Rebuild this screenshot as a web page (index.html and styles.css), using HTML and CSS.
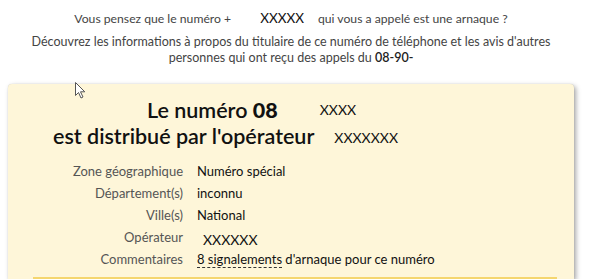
FILE: index.html
```html
<!DOCTYPE html>
<html lang="fr">
<head>
<meta charset="utf-8">
<link rel="stylesheet" href="styles.css">
</head>
<body>
<div class="intro">
  <p class="q">Vous pensez que le numéro +<span class="mask1">XXXXX</span>qui vous a appelé est une arnaque ?</p>
  <p class="d">Découvrez les informations à propos du titulaire de ce numéro de téléphone et les avis d'autres<br>personnes qui ont reçu des appels du <span class="num">08-90-</span></p>
</div>
<div class="card">
  <h1 class="title">
    <span class="tl tl1">Le numéro <b>08</b><span class="mask2">XXXX</span></span>
    <span class="tl tl2">est distribué par l'opérateur<span class="mask3">XXXXXXX</span></span>
  </h1>
  <dl class="info">
    <dt>Zone géographique</dt><dd>Numéro spécial</dd>
    <dt>Département(s)</dt><dd>inconnu</dd>
    <dt>Ville(s)</dt><dd>National</dd>
    <dt>Opérateur</dt><dd><span class="mask4">XXXXXX</span></dd>
    <dt>Commentaires</dt><dd><span class="dotted">8 signalements</span> d'arnaque pour ce numéro</dd>
  </dl>
  <div class="bar"></div>
</div>
<svg class="cursor" width="12" height="18" viewBox="0 0 12 18"><path d="M0.5 0.5 L0.5 13.5 L3.5 10.5 L6 16 L8 15 L5.5 9.8 L9.8 9.8 Z" fill="#fff" stroke="#555" stroke-width="1"/></svg>
</body>
</html>
```
FILE: styles.css
```css
html, body { margin: 0; padding: 0; background: #fff; }
body {
  width: 605px;
  height: 279px;
  overflow: hidden;
  font-family: Lato, "Open Sans", sans-serif;
  position: relative;
}
.intro { text-align: center; color: #444; font-size: 12.5px; padding-top: 9px; width: 566px; margin-left: 8px; }
.intro p { margin: 0; }
.q { line-height: 18px; font-size: 12.2px; }
.mask1 { font-size: 13.5px; color: #111; margin: 0 14px 0 29px; }
.d { margin-top: 6px !important; line-height: 16px; }
.num { color: #222; font-weight: 600; }
.card {
  margin: 18px 0 0 8px;
  width: 566px;
  height: 195px;
  background: #fef6d9;
  border-radius: 4px 4px 0 0;
  box-shadow: 2px 2px 5px rgba(0,0,0,0.35), 0 0 1px rgba(0,0,0,0.2);
  position: relative;
  padding-top: 13px;
  box-sizing: border-box;
}
.title { margin: 0; font-weight: 600; font-size: 21.5px; color: #111; line-height: 26px; }
.tl { display: block; height: 26px; white-space: nowrap; }
.tl1 { padding-left: 139px; }
.tl2 { padding-left: 45px; }
.title b { font-weight: 900; }
.mask2 { font-size: 14px; font-weight: 400; margin-left: 42px; vertical-align: 3px; line-height: 1; }
.mask3 { font-size: 14px; font-weight: 400; margin-left: 20px; vertical-align: 1px; line-height: 1; }
.info {
  display: grid;
  grid-template-columns: 175px auto;
  column-gap: 14px;
  row-gap: 0;
  margin: 11px 0 0 0;
  font-size: 13px;
  line-height: 22px;
}
.info dt { text-align: right; color: #555; }
.info dd { margin: 0; color: #111; }
.mask4 { font-size: 14px; margin-left: 6px; position: relative; top: 3px; }
.dotted { border-bottom: 1px dashed #333; }
.bar { position: absolute; left: 25px; right: 17px; top: 193px; height: 2px; background: #f5d66e; }
.cursor { position: absolute; left: 75px; top: 82px; }
```
